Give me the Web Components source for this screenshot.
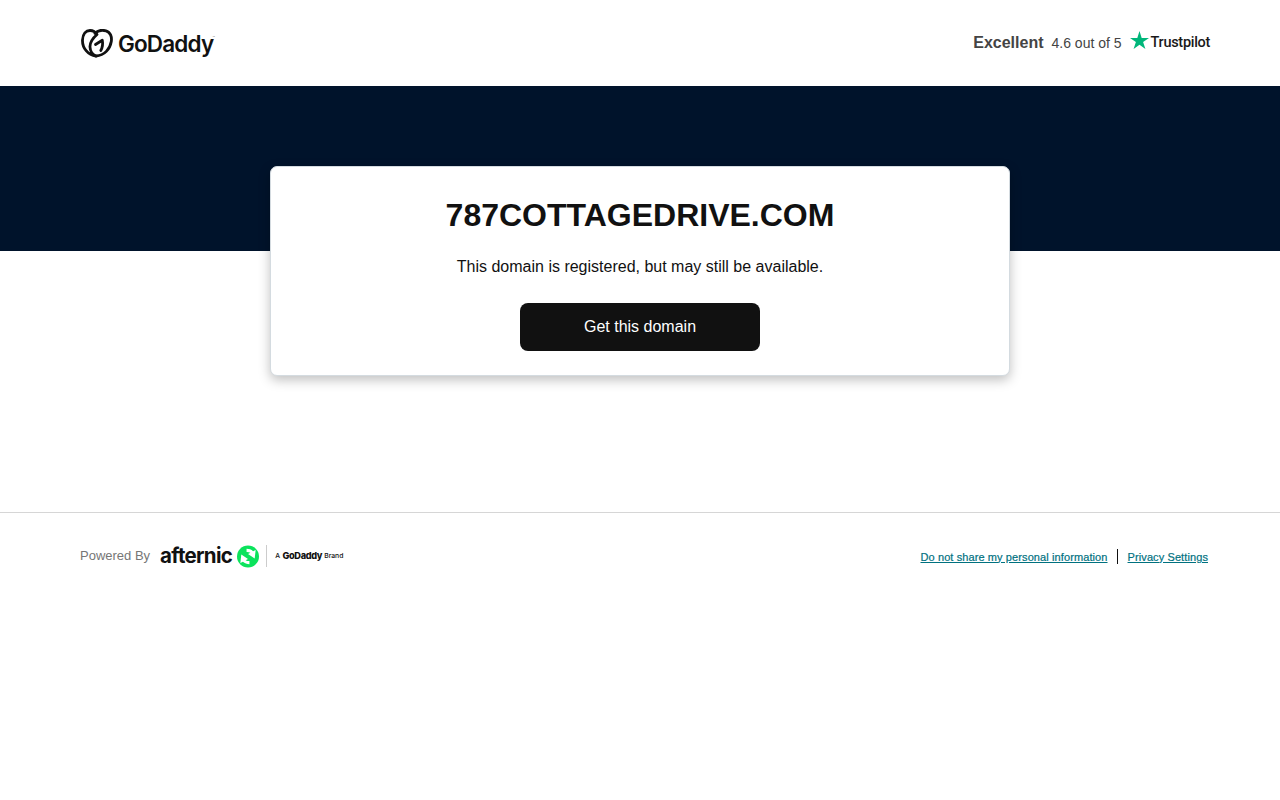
<!DOCTYPE html>
<html lang="en"><head><meta charset="utf-8"><title>787COTTAGEDRIVE.COM</title>
<style>
html,body{margin:0;padding:0;background:#fff;font-family:"Liberation Sans",Arial,sans-serif}
</style></head><body>
<site-header></site-header>
<hero-band></hero-band>
<domain-card domain="787COTTAGEDRIVE.COM"></domain-card>
<site-footer></site-footer>
<script>
function def(name,html,init){customElements.define(name,class extends HTMLElement{connectedCallback(){if(this.shadowRoot)return;const r=this.attachShadow({mode:'open'});r.innerHTML=html;if(init)init(this,r);}});}
def('godaddy-logo',`<style>
:host{display:flex;align-items:center;gap:5px;height:30px}
svg{display:block;flex:none}
span{font:600 22.5px/30px Inter,"Liberation Sans",sans-serif;letter-spacing:-.85px;color:#111;position:relative;top:1px}
sup{position:absolute;right:-2px;top:7px;font:400 3px/3px "Liberation Sans",sans-serif;letter-spacing:0;color:#777}
</style>
<svg width="32" height="29" viewBox="0 0 32 29" fill="none" stroke="#111" stroke-width="2.8" stroke-linecap="round" stroke-linejoin="round">
<path d="M15 27C7 26 1.200 19 1.500 11C1.800 5 5 1.500 9 1.500C12 1.500 14.500 3 16 5.500C12 9 8.800 13 9 18C9.200 22 11.500 25.500 15 27Z"/>
<path d="M14 4.500C16.500 1.500 21 .8 25 1.800C29.500 3 31 8 30.300 12.500C29 20 23.500 26.500 15 27"/>
<path d="M14.500 15.500L21.300 11.300C22 15 21.500 18.500 19.800 21.500"/>
</svg><span>GoDaddy<sup>™</sup></span>`);
def('trustpilot-rating',`<style>
:host{display:flex;align-items:center;color:#444}
b{font-size:16px;line-height:20px}
.s{font-size:14px;line-height:20px;margin-left:8px}
svg{display:block;margin:-7px 0 0 8px}
.t{font:500 14.5px/20px Roboto,"Liberation Sans",sans-serif;letter-spacing:-.3px;color:#191919;margin-left:2px}
</style><b>Excellent</b><span class="s">4.6 out of 5</span>
<svg width="19" height="18" viewBox="0 0 19 18"><path fill="#00b67a" d="M9.500 0l2.200 6.900H19l-5.900 4.200 2.300 6.900-5.900-4.300L3.600 18l2.300-6.900L0 6.900h7.300z"/></svg>
<span class="t">Trustpilot</span>`);
def('site-header',`<style>
:host{display:flex;box-sizing:border-box;height:86px;padding:0 70px 0 81px;align-items:center;justify-content:space-between}
</style><godaddy-logo></godaddy-logo><trustpilot-rating></trustpilot-rating>`);
def('hero-band',`<style>:host{display:block;height:165px;background:#00132b}</style>`);
def('domain-card',`<style>
:host{display:block;box-sizing:border-box;width:740px;height:210px;margin:-85px auto 0;position:relative;background:#fff;border:1px solid #d4dbe0;border-radius:7px;box-shadow:0 4px 12px rgba(0,0,0,.25);text-align:center;padding-top:28px}
h1{margin:0;font-size:32px;line-height:40px;font-weight:700;color:#111}
p{margin:22px 0 0;font-size:16px;line-height:20px;color:#111}
a{display:block;box-sizing:border-box;width:240px;height:48px;margin:26px auto 0;background:#111;border-radius:8px;color:#fff;font-size:16px;line-height:48px;text-decoration:none}
</style><h1></h1><p>This domain is registered, but may still be available.</p><a href="#">Get this domain</a>`,(h,r)=>{r.querySelector('h1').textContent=h.getAttribute('domain')});
def('afternic-logo',`<style>
:host{display:flex;align-items:center}
.w{font:700 20.5px/24px Inter,"Liberation Sans",sans-serif;letter-spacing:-.7px;color:#111}
svg{display:block;margin-left:5px}
i{display:block;width:1px;height:22px;background:#ccc;margin:0 8px 0 7px}
.b{display:flex;align-items:center;font:500 6.800px/10px Inter,"Liberation Sans",sans-serif;color:#111;white-space:nowrap}
.b b{font-weight:800;font-size:9.200px;letter-spacing:-.35px;margin:0 2px 0 2.500px}
</style><span class="w">afternic</span>
<svg width="22" height="23" viewBox="0 0 23 23"><circle cx="11.500" cy="11.500" r="11.500" fill="#0be35c"/>
<path fill="#fff" d="M10 3.500C12.500 3.500 15 4.300 16.800 6L19.500 4.800 18.500 13.500 11.500 8.800 14 7.600C12.800 6.900 11.500 6.600 10 6.700Z"/>
<path fill="#fff" d="M13 19.500C10.500 19.500 8 18.700 6.200 17L3.500 18.200 4.500 9.500 11.500 14.200 9 15.400C10.200 16.100 11.500 16.400 13 16.300Z"/></svg>
<i></i><span class="b">A<b>GoDaddy</b>Brand</span>`);
def('site-footer',`<style>
:host{display:flex;box-sizing:border-box;margin-top:136px;height:88px;border-top:1px solid #d6d6d6;padding:28px 72px 0 80px;justify-content:space-between;align-items:flex-start}
.l{display:flex;align-items:center;height:30px;font-size:13px;color:#767676}
.l span{margin-right:10px;position:relative;top:-1px}
.r{display:flex;align-items:center;height:30px;font-size:11px;padding-top:1px;box-sizing:border-box}
a{color:#00717f;font-weight:400;text-decoration:underline;letter-spacing:.1px;-webkit-text-stroke:.2px #00717f}
i{display:block;width:1px;height:15px;background:#111;margin:0 10px 0 9px}
</style><div class="l"><span>Powered By</span><afternic-logo></afternic-logo></div>
<div class="r"><a href="#">Do not share my personal information</a><i></i><a href="#">Privacy Settings</a></div>`);
</script></body></html>
